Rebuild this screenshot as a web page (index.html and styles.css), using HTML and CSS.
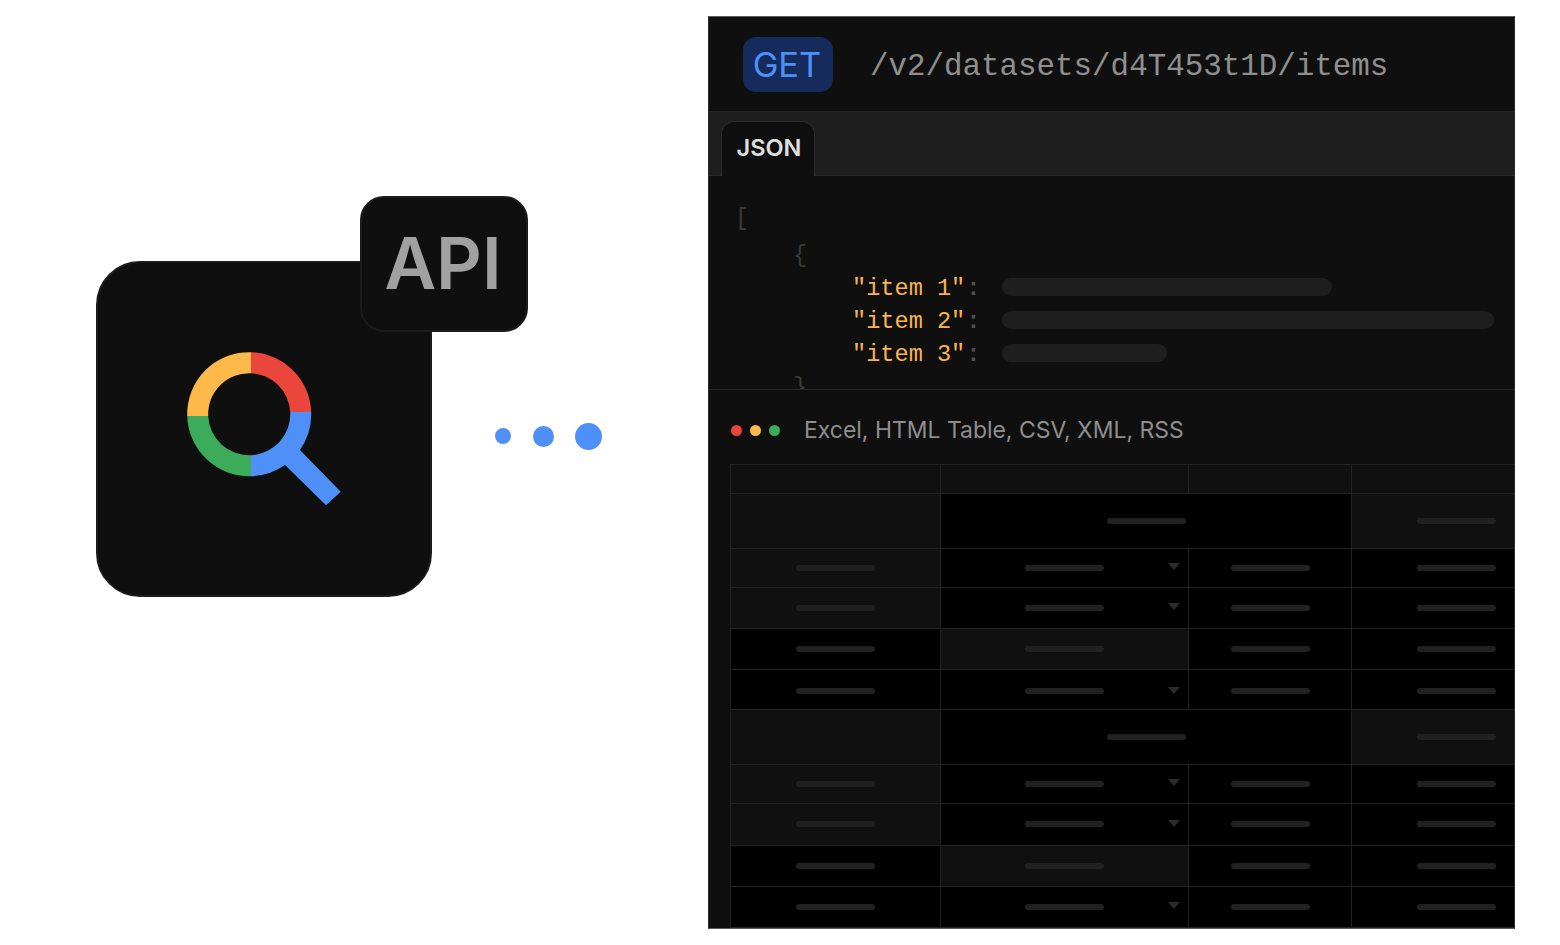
FILE: index.html
```html
<!DOCTYPE html>
<html lang="en">
  <head>
    <meta charset="UTF-8" />
    <meta name="viewport" content="width=device-width, initial-scale=1.0" />
    <title>Search API</title>
    <link rel="stylesheet" href="styles.css">
  </head>
  <body>
    <div class="page">
      <div class="hero">
        <div class="tile">
          <svg class="search-icon" viewBox="184 349 160 160" width="160" height="160">
            <path fill="#fdba4b" d="M251 352.2A62 62 0 0 0 187.2 416H208.2A41 41 0 0 1 251 373.2Z" />
            <path fill="#ea463c" d="M251 352.2A62 62 0 0 1 311.2 412H290.2A41 41 0 0 0 251 373.2Z" />
            <path fill="#3cab5a" d="M187.2 416A62 62 0 0 0 251 476.2V455.2A41 41 0 0 1 208.2 416Z" />
            <path fill="#4e8ff8" d="M311.2 412A62 62 0 0 1 300 450L340.7 491.7 326 505.3 285 465A62 62 0 0 1 251 476.2V455.2A41 41 0 0 0 290.2 412Z" />
          </svg>
          <div class="badge">API</div>
        </div>
        <div class="dots">
          <span class="dot dot-sm"></span>
          <span class="dot dot-md"></span>
          <span class="dot dot-lg"></span>
        </div>
      </div>

      <div class="panel">
        <div class="request">
          <span class="method">GET</span>
          <span class="path">/v2/datasets/d4T453t1D/items</span>
        </div>
        <div class="tabs">
          <div class="tab">JSON</div>
        </div>
        <div class="code">
          <div class="line line-open">[</div>
          <div class="line line-obj">{</div>
          <div class="line line-item"><span class="key">"item 1"</span><span class="colon">:</span><span class="json-bar json-bar-md"></span></div>
          <div class="line line-item"><span class="key">"item 2"</span><span class="colon">:</span><span class="json-bar json-bar-lg"></span></div>
          <div class="line line-item"><span class="key">"item 3"</span><span class="colon">:</span><span class="json-bar json-bar-sm"></span></div>
          <div class="line line-close">}</div>
        </div>
        <div class="formats">
          <div class="lights">
            <span class="light light-red"></span>
            <span class="light light-yellow"></span>
            <span class="light light-green"></span>
          </div>
          <span class="formats-text">Excel, HTML Table, CSV, XML, RSS</span>
        </div>
        <div class="sheet">
          <div class="cell dim"></div>
          <div class="cell dim"></div>
          <div class="cell dim"></div>
          <div class="cell dim"></div>

          <div class="cell dim"></div>
          <div class="cell wide"><span class="bar"></span></div>
          <div class="cell dim"><span class="bar"></span></div>

          <div class="cell dim"><span class="bar"></span></div>
          <div class="cell"><span class="bar"></span><span class="caret"></span></div>
          <div class="cell"><span class="bar"></span></div>
          <div class="cell"><span class="bar"></span></div>

          <div class="cell dim"><span class="bar"></span></div>
          <div class="cell"><span class="bar"></span><span class="caret"></span></div>
          <div class="cell"><span class="bar"></span></div>
          <div class="cell"><span class="bar"></span></div>

          <div class="cell"><span class="bar"></span></div>
          <div class="cell dim"><span class="bar"></span></div>
          <div class="cell"><span class="bar"></span></div>
          <div class="cell"><span class="bar"></span></div>

          <div class="cell low"><span class="bar"></span></div>
          <div class="cell low"><span class="bar"></span><span class="caret"></span></div>
          <div class="cell low"><span class="bar"></span></div>
          <div class="cell low"><span class="bar"></span></div>

          <div class="cell dim"></div>
          <div class="cell wide"><span class="bar"></span></div>
          <div class="cell dim"><span class="bar"></span></div>

          <div class="cell dim"><span class="bar"></span></div>
          <div class="cell"><span class="bar"></span><span class="caret"></span></div>
          <div class="cell"><span class="bar"></span></div>
          <div class="cell"><span class="bar"></span></div>

          <div class="cell dim"><span class="bar"></span></div>
          <div class="cell"><span class="bar"></span><span class="caret"></span></div>
          <div class="cell"><span class="bar"></span></div>
          <div class="cell"><span class="bar"></span></div>

          <div class="cell"><span class="bar"></span></div>
          <div class="cell dim"><span class="bar"></span></div>
          <div class="cell"><span class="bar"></span></div>
          <div class="cell"><span class="bar"></span></div>

          <div class="cell"><span class="bar"></span></div>
          <div class="cell"><span class="bar"></span><span class="caret"></span></div>
          <div class="cell"><span class="bar"></span></div>
          <div class="cell"><span class="bar"></span></div>
        </div>
      </div>
    </div>
  </body>
</html>
```

FILE: styles.css
```css
body {
  margin: 0;
  padding: 0;
  background-color: #ffffff;
  font-family: Inter, "Liberation Sans", sans-serif;
  overflow: hidden;
}
.page {
  display: flex;
  height: 945px;
  box-sizing: border-box;
  padding-top: 16px;
}

/* left side */
.hero {
  display: flex;
  align-items: flex-start;
  width: 708px;
  flex-shrink: 0;
  box-sizing: border-box;
  padding-left: 96px;
  padding-top: 245px;
}
.tile {
  position: relative;
  display: flex;
  align-items: center;
  justify-content: center;
  width: 336px;
  height: 336px;
  box-sizing: border-box;
  background-color: #0f0f0f;
  border: 2px solid #1c1c1c;
  border-radius: 44px;
}
.badge {
  position: absolute;
  top: -67px;
  left: 262px;
  display: flex;
  align-items: center;
  justify-content: center;
  width: 168px;
  height: 136px;
  box-sizing: border-box;
  padding-bottom: 2px;
  padding-right: 2px;
  background-color: #0f0f0f;
  border: 2px solid #1c1c1c;
  border-radius: 24px;
  color: #a1a1a1;
  font-size: 71px;
  font-weight: 600;
}
.dots {
  display: flex;
  align-items: center;
  gap: 21px;
  height: 336px;
  margin-top: 7px;
  margin-left: 63px;
}
.dot {
  display: block;
  border-radius: 50%;
  background-color: #4e8ff8;
}
.dot-sm {
  width: 16px;
  height: 16px;
}
.dot-md {
  width: 21px;
  height: 21px;
  margin-left: 1px;
}
.dot-lg {
  width: 27px;
  height: 27px;
}

/* right side */
.panel {
  display: flex;
  flex-direction: column;
  width: 807px;
  height: 913px;
  box-sizing: border-box;
  background-color: #0f0f0f;
  border: 1px solid #2a2a2a;
  border-top-color: #5c5c5c;
  border-bottom-color: #5c5c5c;
  overflow: hidden;
}
.request {
  display: flex;
  align-items: center;
  gap: 37px;
  height: 94px;
  flex-shrink: 0;
  padding-left: 34px;
}
.method {
  display: flex;
  align-items: center;
  justify-content: center;
  width: 90px;
  height: 55px;
  box-sizing: border-box;
  padding-right: 2px;
  background-color: #152b5c;
  border-radius: 13px;
  color: #4e8ff8;
  font-size: 34.5px;
  font-weight: 400;
}
.path {
  padding-top: 4px;
  color: #8f8f8f;
  font-family: "Liberation Mono", monospace;
  font-size: 30.85px;
}
.tabs {
  display: flex;
  align-items: flex-end;
  height: 65px;
  flex-shrink: 0;
  box-sizing: border-box;
  padding-left: 12px;
  background-color: #1e1e1e;
  border-top: 1px solid #262626;
  border-bottom: 1px solid #2a2a2a;
}
.tab {
  display: flex;
  align-items: center;
  justify-content: center;
  width: 94px;
  height: 55px;
  margin-bottom: -1px;
  box-sizing: border-box;
  padding-bottom: 3px;
  padding-left: 2px;
  background-color: #0f0f0f;
  border: 1px solid #2e2e2e;
  border-bottom: none;
  border-radius: 13px 13px 0 0;
  color: #e0e0e0;
  font-size: 23.5px;
  font-weight: 600;
}
.code {
  height: 214px;
  flex-shrink: 0;
  box-sizing: border-box;
  padding-top: 26px;
  padding-left: 27px;
  border-bottom: 1px solid #262626;
  color: #3a3a3a;
  font-family: "Liberation Mono", monospace;
  font-size: 23.6px;
  overflow: hidden;
}
.line {
  display: flex;
  align-items: center;
  height: 33px;
  box-sizing: border-box;
}
.line-open {
  margin-left: -1px;
}
.line-obj {
  margin-top: 2px;
  padding-top: 3px;
  padding-left: 57px;
}
.line-close {
  padding-top: 3px;
  padding-left: 57px;
}
.line-item {
  padding-left: 116px;
}
.key {
  padding-top: 4px;
  color: #f9b44e;
}
.colon {
  margin-left: 1px;
  padding-top: 4px;
  color: #505050;
  font-weight: 700;
}
.json-bar {
  display: block;
  height: 18px;
  margin-left: 22px;
  border-radius: 9px;
  background-color: #1e1e1e;
}
.json-bar-sm {
  width: 165px;
}
.json-bar-md {
  width: 330px;
}
.json-bar-lg {
  width: 492px;
}
.formats {
  display: flex;
  align-items: center;
  gap: 24px;
  height: 74px;
  flex-shrink: 0;
  box-sizing: border-box;
  padding-top: 6px;
  padding-left: 22px;
}
.lights {
  display: flex;
  gap: 8px;
}
.light {
  display: block;
  width: 11px;
  height: 11px;
  border-radius: 50%;
}
.light-red {
  background-color: #e8453a;
}
.light-yellow {
  background-color: #fdba4b;
}
.light-green {
  background-color: #3cab5a;
}
.formats-text {
  color: #8e8e8e;
  font-size: 22.95px;
}
.sheet {
  display: grid;
  grid-template-columns: 210px 248px 163px 210px;
  grid-template-rows: 29px 55px 39px 41px 41px 40px 55px 39px 42px 41px 41px;
  flex-shrink: 0;
  margin-left: 21px;
  width: 832px;
  box-sizing: border-box;
  border-top: 1px solid #222222;
  border-left: 1px solid #222222;
}
.cell {
  position: relative;
  display: flex;
  align-items: center;
  justify-content: center;
  box-sizing: border-box;
  background-color: #000000;
  border-right: 1px solid #222222;
  border-bottom: 1px solid #222222;
}
.dim {
  background-color: #101010;
}
.wide {
  grid-column: span 2;
}
.low {
  padding-top: 4px;
}
.bar {
  display: block;
  width: 79px;
  height: 6px;
  margin-top: -1px;
  border-radius: 3px;
  background-color: #212121;
}
.caret {
  position: absolute;
  top: 50%;
  right: 8px;
  margin-top: -5px;
  width: 0;
  height: 0;
  border-left: 6px solid transparent;
  border-right: 6px solid transparent;
  border-top: 7px solid #2b2b2b;
}
.low .caret {
  margin-top: -3px;
}
```
